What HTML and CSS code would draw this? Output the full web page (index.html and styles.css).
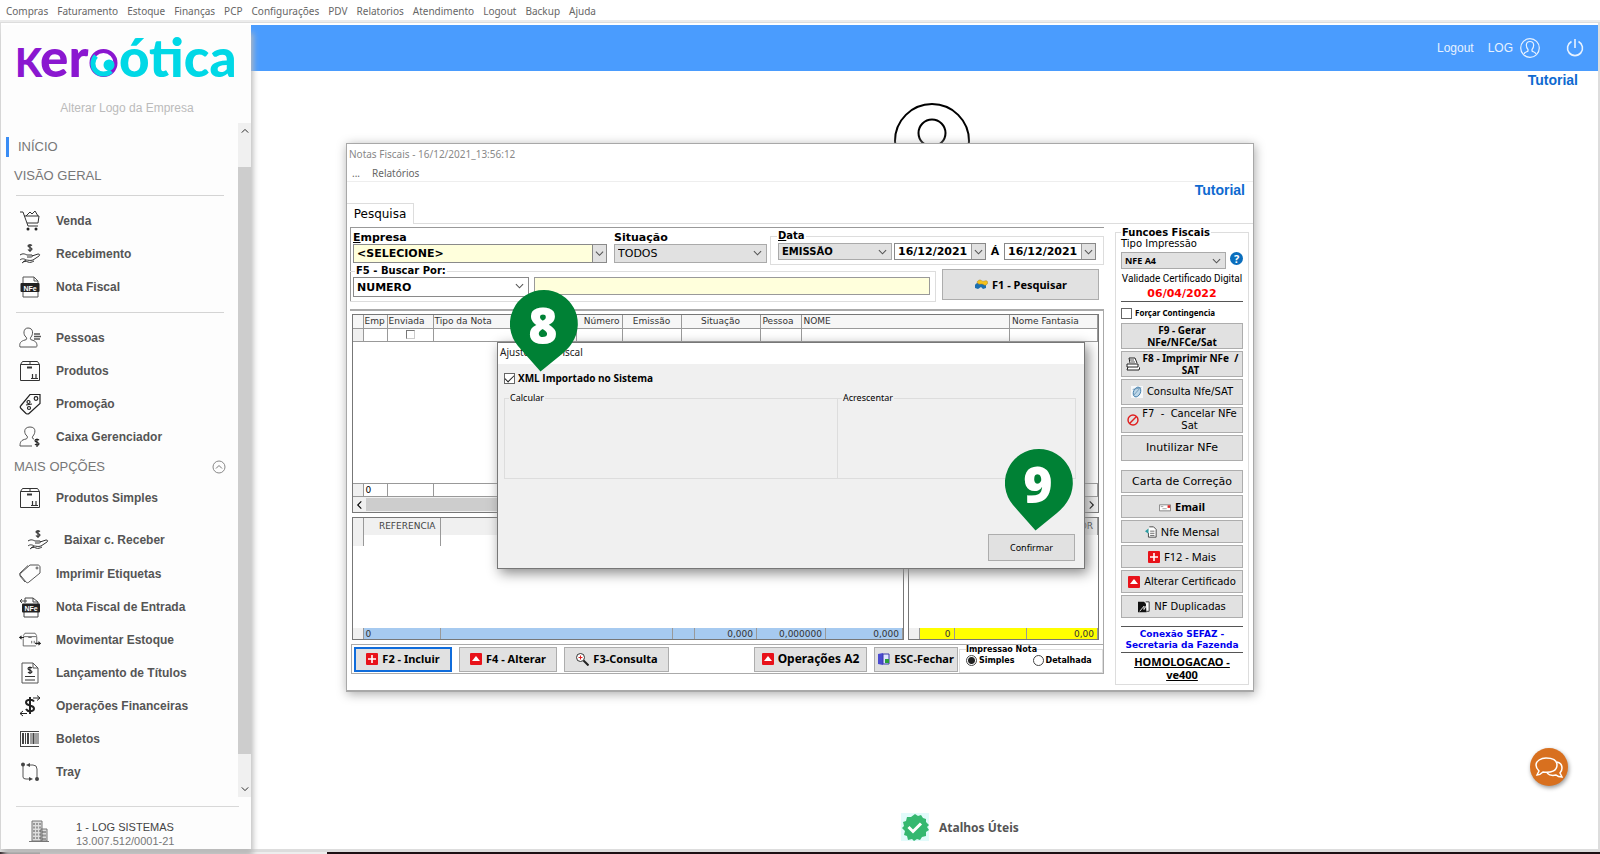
FILE: index.html
```html
<!DOCTYPE html>
<html lang="pt-BR">
<head>
<meta charset="utf-8">
<title>Kero Ótica - Notas Fiscais</title>
<link rel="stylesheet" href="styles.css">
</head>
<body>
<svg class="defs" aria-hidden="true">
  <symbol id="chev" viewBox="0 0 10 6"><path d="M1 1l4 4 4-4" fill="none" stroke="currentColor" stroke-width="1.2"/></symbol>
  <symbol id="cart" viewBox="0 0 22 22"><g fill="none" stroke="#333" stroke-width="1"><path d="M1 2h3l5 14h10M5 6h15l-1 7H8M7 6l4-4 2 2 3-3 3 5"/></g><circle cx="9" cy="19" r="1.5" fill="#222"/><circle cx="17" cy="19" r="1.5" fill="#222"/></symbol>
  <symbol id="hand" viewBox="0 0 22 22"><g fill="none" stroke="#333" stroke-width="1"><path d="M1 12c3-2 5-1 7 0h5c1 1 0 2-1 2H8M13 13l6-2c2 0 2 1 1 2l-6 4c-3 1-5 0-7 0l-3 2M1 17c2-2 5-1 6 0M3 20c2-2 4-2 6-1s4 0 6-1"/><path d="M13 2.500c-1-1-4-1-4 .5s4 1.500 4 3-3 2-4 .5M11 1v8" stroke-width="1.200"/></g></symbol>
  <symbol id="nfe" viewBox="0 0 22 22"><path d="M4 7V1h11l4 4v3M4 15v6h15v-6M15 1v4h4" fill="none" stroke="#555"/><rect x="1.500" y="7" width="19" height="9" rx="1" fill="#222"/><text x="11" y="14.500" class="nfe-text" text-anchor="middle">NFe</text></symbol>
  <symbol id="people" viewBox="0 0 22 22"><g fill="none" stroke="#555"><path d="M9 1c6 0 5 7 3 9-1 1-1 3 1 3 3 1 5 2 5 6 0 1-1 1-1 1H1c-1-4 1-6 5-7 2 0 2-2 1-3C4 8 4 1 9 1z"/><path d="M15 7h6M15 9.500h7M15 12h6" stroke-width="1.300"/></g></symbol>
  <symbol id="box" viewBox="0 0 22 22"><g fill="none" stroke="#333"><path d="M1.500 4.500h19v16h-19zM1.500 4.500l2-3h15l2 3M11 1v3"/><path d="M8 7.500h5" stroke-width="2"/><path d="M13.500 18v-4M17 18v-4M12 18.500h7" stroke-width="1.200"/></g></symbol>
  <symbol id="promo" viewBox="0 0 22 22"><g fill="none" stroke="#222" stroke-width="1.200"><path d="M11 1.500h10v9L10 20.500c-1 1-2 .5-3 0l-5-5c-1-1-1-2 0-3z"/><circle cx="17" cy="5.500" r="1.800"/><circle cx="9.500" cy="9" r="1.500"/><circle cx="10" cy="15" r="1.500"/><path d="M7 12l6-1"/></g></symbol>
  <symbol id="cashier" viewBox="0 0 22 22"><g fill="none" stroke="#555"><path d="M11 1c7 0 5 7 3 9-1 1-1 3 1 3M8 10C5 8 4 1 11 1M8 10c1 1 0 3-1 3-5 1-6 3-6 7h12"/><path d="M20 14c-1-1-4-1-4 .7s4 1.300 4 3-3 1.800-4 .3M18 12.500v8.500" stroke="#222" stroke-width="1.200"/></g></symbol>
  <symbol id="tag" viewBox="0 0 22 22"><g fill="none" stroke="#555"><path d="M11 2h8c1 0 2 1 2 2v6L10 19c-1 1-2 1-3 0l-5-6c-1-1-1-2 0-3zM9 2.500L1 10c-1 1 0 2 0 3l5 6"/><circle cx="18" cy="5" r="1"/></g></symbol>
  <symbol id="nfein" viewBox="0 0 22 22"><path d="M6 7V2h8l5 4v3M5 15v6h14v-6M14 2v4h5M8 5H1M3 3L1 5l2 2" fill="none" stroke="#444"/><rect x="3" y="7.500" width="18" height="9" rx="1" fill="#222"/><text x="12" y="14.500" class="nfe-text" text-anchor="middle">NFe</text></symbol>
  <symbol id="move" viewBox="0 0 26 22"><g fill="none" stroke="#555"><path d="M5 7h16v10M5 9v9h15M5 6l2-3h12l2 3M11 8h4M15 15v-3M18 15v-3"/><path d="M6 8H1l2-2M1 8l2 2M19 15h6l-2-2M25 15l-2 2" stroke="#222" stroke-width="1.300"/></g></symbol>
  <symbol id="doc" viewBox="0 0 22 22"><g fill="none" stroke="#555"><path d="M3 1h11l5 5v15H3zM14 1v5h5"/><path d="M6 14.500h10M6 18h10" stroke="#333"/><path d="M13 6c-1-1-4-1-4 .7s4 1.300 4 3-3 1.800-4 .3M11 4.500v7.500" stroke="#222" stroke-width="1.100"/></g></symbol>
  <symbol id="ops" viewBox="0 0 22 22"><g fill="none" stroke="#222"><path d="M15 6.500c-2-3-8-2-8 1 0 4 8 2 8 6 0 3-6 4-8 .5M11 2v17" stroke-width="2"/><path d="M14 3h7M18 .5L21 3l-3 2.500M8 18.500H1M4 16l-3 2.500L4 21"/></g></symbol>
  <symbol id="barcode" viewBox="0 0 22 22"><g fill="none" stroke="#444"><path d="M1.500 3v16M1 3.500h19M1 18.500h19"/><path d="M4 5v11M9 5v11M14.500 5v11" stroke-width="2"/><path d="M6.500 5v11M12 5v11M17 5v11M19 5v11"/></g></symbol>
  <symbol id="tray" viewBox="0 0 22 22"><g fill="none" stroke="#555"><path d="M4 5v11q0 2 3 2h5M18 18V8q0-4-4-4h-4"/></g><g fill="#444"><circle cx="4" cy="3.500" r="2"/><circle cx="18" cy="18" r="2"/><path d="M7 4l4-2v4zM14 18l-4-2v4z"/></g></symbol>
  <symbol id="plus" viewBox="0 0 12 12"><rect width="12" height="12" rx="1" fill="#e8121a"/><path d="M6 2v8M2 6h8" stroke="#fff" stroke-width="1.600"/></symbol>
  <symbol id="up" viewBox="0 0 12 12"><rect width="12" height="12" rx="1" fill="#e8121a"/><path d="M6 3l4 5H2z" fill="#fff"/></symbol>
  <symbol id="user" viewBox="0 0 20 20"><g fill="none" stroke="currentColor" stroke-width="1.200"><circle cx="10" cy="10" r="9.300"/><path d="M10 3.500c-5 0-4 6-2 8v1.500c-1 1-3 .5-4 3M10 3.500c5 0 4 6 2 8v1.500c1 1 3 .5 4 3"/></g></symbol>
</svg>

<nav class="menubar" aria-label="Menu principal">
  <a href="#">Compras</a><a href="#">Faturamento</a><a href="#">Estoque</a><a href="#">Finanças</a><a href="#">PCP</a><a href="#">Configurações</a><a href="#">PDV</a><a href="#">Relatorios</a><a href="#">Atendimento</a><a href="#">Logout</a><a href="#">Backup</a><a href="#">Ajuda</a>
</nav>

<div class="shell">
  <aside class="sidebar">
    <svg class="logo" viewBox="0 0 224 64" role="img" aria-label="Kero Ótica">
      <text x="-1" y="49" class="logo-k">K</text>
      <text x="24" y="49" class="logo-word">er</text>
      <circle cx="87.500" cy="35" r="12" fill="#fff" stroke="#8a17d0" stroke-width="4"/>
      <path d="M80 28a10.500 10.500 0 1 0 15 15" fill="none" stroke="#00d8e6" stroke-width="5"/>
      <circle cx="93" cy="37" r="5.500" fill="#00d8e6"/>
      <text x="103" y="49" class="logo-word logo-cyan">ótica</text>
    </svg>
    <a class="change-logo" href="#">Alterar Logo da Empresa</a>
    <div class="nav-wrap">
      <nav class="nav" aria-label="Navegação">
        <a class="home" href="#">INÍCIO</a>
        <h2 class="group">VISÃO GERAL</h2>
        <hr>
        <a class="item" href="#"><svg><use href="#cart"/></svg>Venda</a>
        <a class="item" href="#"><svg><use href="#hand"/></svg>Recebimento</a>
        <a class="item" href="#"><svg><use href="#nfe"/></svg>Nota Fiscal</a>
        <hr>
        <a class="item" href="#"><svg><use href="#people"/></svg>Pessoas</a>
        <a class="item" href="#"><svg><use href="#box"/></svg>Produtos</a>
        <a class="item" href="#"><svg><use href="#promo"/></svg>Promoção</a>
        <a class="item" href="#"><svg><use href="#cashier"/></svg>Caixa Gerenciador</a>
        <h2 class="group more">MAIS OPÇÕES
          <svg class="fold" viewBox="0 0 14 14"><circle cx="7" cy="7" r="6" fill="none" stroke="#888"/><path d="M4 8.500l3-3 3 3" fill="none" stroke="#777"/></svg>
        </h2>
        <a class="item" href="#"><svg><use href="#box"/></svg>Produtos Simples</a>
        <a class="item sub" href="#"><svg><use href="#hand"/></svg>Baixar c. Receber</a>
        <a class="item" href="#"><svg><use href="#tag"/></svg>Imprimir Etiquetas</a>
        <a class="item" href="#"><svg><use href="#nfein"/></svg>Nota Fiscal de Entrada</a>
        <a class="item" href="#"><svg><use href="#move"/></svg>Movimentar Estoque</a>
        <a class="item" href="#"><svg><use href="#doc"/></svg>Lançamento de Títulos</a>
        <a class="item" href="#"><svg><use href="#ops"/></svg>Operações Financeiras</a>
        <a class="item" href="#"><svg><use href="#barcode"/></svg>Boletos</a>
        <a class="item" href="#"><svg><use href="#tray"/></svg>Tray</a>
      </nav>
      <div class="vscroll">
        <svg class="flip"><use href="#chev"/></svg>
        <div class="thumb"></div>
        <svg><use href="#chev"/></svg>
      </div>
    </div>
    <div class="company">
      <svg viewBox="0 0 20 22"><path d="M3 1h10v20H3zM12 9h6v12h-6zM0 21.500h20" fill="#ddd" stroke="#777"/><path d="M5 3v17M8 3v17M11 3v17M14 11v9M16 11v9" stroke="#555" stroke-dasharray="2 1.500"/></svg>
      <p><span class="company-name">1 - LOG SISTEMAS</span><br>13.007.512/0001-21</p>
    </div>
  </aside>

  <main class="main">
    <header class="topbar">
      <a href="#">Logout</a>
      <a class="user" href="#">LOG <svg><use href="#user"/></svg></a>
      <button class="power" aria-label="Desligar"><svg viewBox="0 0 18 18"><path d="M5.500 2.500a7.500 7.500 0 1 0 7 0M9 0v9" fill="none" stroke="#e8f2ff" stroke-width="1.600"/></svg></button>
    </header>
    <a class="tutorial" href="#">Tutorial</a>
    <svg class="avatar" viewBox="0 0 78 78"><g fill="none" stroke="#000" stroke-width="2"><circle cx="39" cy="39" r="37"/><circle cx="39" cy="31" r="13.500"/><path d="M14 66c0-30 50-30 50 0"/></g></svg>

    <section class="window" aria-label="Notas Fiscais">
      <div class="win-title">Notas Fiscais - 16/12/2021_13:56:12</div>
      <div class="win-menu"><a href="#">...</a><a href="#">Relatórios</a></div>
      <div class="win-tools"><a class="tutorial-link" href="#">Tutorial</a></div>
      <div class="tabs"><button class="tab">Pesquisa</button></div>
      <div class="win-body">
        <div class="left">
          <form class="search">
            <div class="row1">
              <div class="field">
                <label for="empresa"><u>E</u>mpresa</label>
                <div class="combo boxed cream"><select id="empresa"><option>&lt;SELECIONE&gt;</option></select><svg><use href="#chev"/></svg></div>
              </div>
              <div class="field">
                <label for="situacao">Situação</label>
                <div class="combo gray plain"><select id="situacao"><option>TODOS</option></select><svg><use href="#chev"/></svg></div>
              </div>
              <fieldset class="dates">
                <legend><u>D</u>ata</legend>
                <div class="combo gray"><select aria-label="Tipo de data"><option>EMISSÃO</option></select><svg><use href="#chev"/></svg></div>
                <div class="date"><input type="text" value="16/12/2021" aria-label="Data inicial"><button type="button" aria-label="Abrir calendário"><svg><use href="#chev"/></svg></button></div>
                <span class="to">Á</span>
                <div class="date"><input type="text" value="16/12/2021" aria-label="Data final"><button type="button" aria-label="Abrir calendário"><svg><use href="#chev"/></svg></button></div>
              </fieldset>
            </div>
            <div class="row2">
              <fieldset class="by">
                <legend>F5 - Buscar Por:</legend>
                <div class="combo"><select aria-label="Buscar por"><option>NUMERO</option></select><svg><use href="#chev"/></svg></div>
                <input class="term" type="text" aria-label="Termo da busca">
              </fieldset>
              <button class="btn find" type="button"><svg class="binoc" viewBox="0 0 14 11"><path d="M1 6c1-2 4-3 6-2l5 1v4l-3 1-2-2-3 2-3-1z" fill="#1c6fb0"/><path d="M3 3c2-3 4-2 5-1s4-1 5 0 1 3-1 4-2-1-4-1-4 1-5-2z" fill="#f5c21b" stroke="#a8842a" stroke-width=".5"/></svg>F1 - Pesquisar</button>
            </div>
          </form>

          <div class="tables">
            <div class="gridbox">
              <table class="notes">
                <colgroup><col class="c-mark"><col class="c-emp"><col class="c-env"><col class="c-tipo"><col class="c-env"><col class="c-emi"><col class="c-sit"><col class="c-pes"><col><col class="c-fan"></colgroup>
                <thead><tr><th></th><th>Emp</th><th>Enviada</th><th>Tipo da Nota</th><th class="r">Número</th><th class="c">Emissão</th><th class="c">Situação</th><th>Pessoa</th><th>NOME</th><th>Nome Fantasia</th></tr></thead>
                <tbody><tr><td class="mark"></td><td></td><td class="c"><input type="checkbox" aria-label="Enviada"></td><td></td><td></td><td></td><td></td><td></td><td></td><td></td></tr></tbody>
              </table>
              <div class="blank"></div>
              <table class="notes foot">
                <colgroup><col class="c-mark"><col class="c-emp"><col class="c-env"><col></colgroup>
                <tbody><tr><td class="mark"></td><td>0</td><td></td><td></td></tr></tbody>
              </table>
              <div class="hscroll"><svg class="turn-l"><use href="#chev"/></svg><div class="hthumb"></div><svg class="turn-r"><use href="#chev"/></svg></div>
            </div>
            <div class="lower">
              <div class="gridbox">
                <table class="items">
                  <colgroup><col class="c-mark"><col class="c-ref"><col></colgroup>
                  <thead><tr><th></th><th class="r">REFERENCIA</th><th></th></tr></thead>
                  <tbody><tr><td class="mark"></td><td></td><td class="open"></td></tr></tbody>
                </table>
                <div class="blank"></div>
                <table class="totals blue">
                  <colgroup><col class="c-mark"><col class="c-ref"><col><col class="c-s"><col class="c-q"><col class="c-v"><col class="c-ref"></colgroup>
                  <tbody><tr><td class="mark"></td><td class="l">0</td><td></td><td></td><td>0,000</td><td>0,000000</td><td>0,000</td></tr></tbody>
                </table>
              </div>
              <div class="gridbox">
                <table class="items">
                  <colgroup><col class="c-mark"><col></colgroup>
                  <thead><tr><th></th><th class="r">VALOR</th></tr></thead>
                  <tbody><tr><td class="mark"></td><td class="open"></td></tr></tbody>
                </table>
                <div class="blank"></div>
                <table class="totals yellow">
                  <colgroup><col class="c-mark"><col class="c-n"><col><col class="c-fv"></colgroup>
                  <tbody><tr><td class="mark"></td><td>0</td><td></td><td>0,00</td></tr></tbody>
                </table>
              </div>
            </div>
          </div>

          <div class="actions">
            <button class="btn b98 focus"><svg><use href="#plus"/></svg>F2 - Incluir</button>
            <button class="btn b98"><svg><use href="#up"/></svg>F4 - Alterar</button>
            <button class="btn b105"><svg class="lens" viewBox="0 0 14 14"><circle cx="5.500" cy="5.500" r="4" fill="#fff" stroke="#333"/><path d="M5.500 3.500v4M3.500 5.500h4" stroke="#d22"/><path d="M8.500 8.500l5 5" stroke="#222" stroke-width="2"/></svg>F3-Consulta</button>
            <button class="btn b113 wide push"><svg><use href="#up"/></svg>Operações A2</button>
            <button class="btn b84"><svg viewBox="0 0 12 12"><path d="M0 1l5-1v12l-5-1z" fill="#4a4ad0"/><path d="M5 1h6v10H5z" fill="#dfe6ff" stroke="#3a3aa8"/><path d="M7 6h4v4H7z" fill="#2aa03a"/></svg>ESC-Fechar</button>
            <fieldset class="print">
              <legend>Impressao Nota</legend>
              <label><input type="radio" name="imp" checked>Simples</label>
              <label><input type="radio" name="imp">Detalhada</label>
            </fieldset>
          </div>
        </div>

        <fieldset class="fiscal">
          <legend>Funcoes Fiscais</legend>
          <label class="small" for="tipo">Tipo Impressão</label>
          <div class="tipo-row">
            <div class="combo gray"><select id="tipo"><option>NFE A4</option></select><svg><use href="#chev"/></svg></div>
            <button class="help" aria-label="Ajuda">?</button>
          </div>
          <p class="validity">Validade Certificado Digital</p>
          <p class="expiry">06/04/2022</p>
          <label class="force"><input type="checkbox">Forçar Contingencia</label>
          <div class="stack">
            <button class="btn two">F9 - Gerar<br>NFe/NFCe/Sat</button>
            <button class="btn two"><svg class="printer" viewBox="0 0 14 14"><path d="M4 6L3 1h6l2 5M1 7h11v3H1zM2 10l-1 3h12l1-3" fill="#fff" stroke="#222"/><path d="M4 3h4M5 5h4" stroke="#555"/></svg><span>F8 - Imprimir NFe &nbsp;/<br>SAT</span></button>
            <button class="btn reg"><svg viewBox="0 0 14 14"><rect width="14" height="14" fill="#f6f8fa"/><ellipse cx="7" cy="7" rx="4" ry="6" transform="rotate(25 7 7)" fill="#bcd6e8" stroke="#3a78a8"/><path d="M2 4l10-2M3 11l7-8" stroke="#6a94b4"/></svg>Consulta Nfe/SAT</button>
            <button class="btn reg two"><svg viewBox="0 0 14 14"><circle cx="7" cy="7" r="5.800" fill="none" stroke="#e02020" stroke-width="1.700"/><path d="M3 11l8-8" stroke="#e02020" stroke-width="1.700"/></svg><span>F7 &nbsp;- &nbsp;Cancelar NFe<br>Sat</span></button>
            <button class="btn reg big">Inutilizar NFe</button>
          </div>
          <div class="stack low">
            <button class="btn reg big">Carta de Correção</button>
            <button class="btn"><svg viewBox="0 0 14 12"><path d="M.5 3.500h13v7H.5z" fill="#fff" stroke="#777"/><path d="M2 5.500h3M4 8h5" stroke="#999"/><path d="M10 4h3v3h-3z" fill="#d22"/></svg>Email</button>
            <button class="btn reg cond"><svg viewBox="0 0 14 14"><path d="M5 1h5l3 3v9H4V8" fill="#fff" stroke="#333"/><path d="M6 6h5M6 8.500h5M6 11h5" stroke="#555"/><path d="M0 6l4-3v6z" fill="#2a9aa0"/></svg>Nfe Mensal</button>
            <button class="btn reg cond"><svg><use href="#plus"/></svg>F12 - Mais</button>
            <button class="btn reg"><svg><use href="#up"/></svg>Alterar Certificado</button>
            <button class="btn reg"><svg viewBox="0 0 14 14"><path d="M0 1h7l3 3v9H0z" fill="#111"/><path d="M2 12l5-6v4l3-5" fill="none" stroke="#fff"/><path d="M9 1h4v11h-3" fill="#fff" stroke="#222"/></svg>NF Duplicadas</button>
          </div>
          <p class="sefaz">Conexão SEFAZ -<br>Secretaria da Fazenda</p>
          <a class="homolog" href="#">HOMOLOGACAO -<br>ve400</a>
        </fieldset>
      </div>

      <div class="dialog" role="dialog" aria-label="Ajuste Nota Fiscal">
        <div class="dlg-title">Ajuste Nota Fiscal</div>
        <div class="dlg-body">
          <label class="xml"><input type="checkbox" checked>XML Importado no Sistema</label>
          <div class="groups">
            <fieldset><legend>Calcular</legend></fieldset>
            <fieldset><legend>Acrescentar</legend></fieldset>
          </div>
          <button class="btn confirm">Confirmar</button>
        </div>
        <svg class="pin pin-8" viewBox="0 0 68 82"><path d="M34 0a34 34 0 0 1 28 53q-3 5-10 11L30.500 81.500 8 56A34 34 0 0 1 34 0z" fill="#008135"/><text x="33" y="54" text-anchor="middle">8</text></svg>
        <svg class="pin pin-9" viewBox="0 0 68 82"><path d="M34 0a34 34 0 0 1 28 53q-3 5-10 11L30.500 81.500 8 56A34 34 0 0 1 34 0z" fill="#008135"/><text x="33" y="54" text-anchor="middle">9</text></svg>
      </div>
    </section>

    <a class="shortcuts" href="#">
      <svg viewBox="0 0 28 28"><rect width="28" height="28" fill="#e2fbfb"/><path d="M14 1l3 2 3-1 2 3 3 1v3l3 3-2 2 2 3-3 2v4l-4 1-2 3-3-1-3 2-2-2-4 1-1-4-3-1 1-4-3-3 2-2-1-4 3-1 1-4 4 0z" fill="#35b870"/><path d="M7.500 14l4.500 4.500 8-8" fill="none" stroke="#fff" stroke-width="3"/></svg>
      Atalhos Úteis
    </a>
    <button class="chat" aria-label="Chat"><svg viewBox="0 0 30 30"><g fill="none" stroke="#fff" stroke-width="1.500"><path d="M12 6c-5 0-10 3-10 7 0 3 1 4 3 6l-2 4c3 0 5-2 6-3 8 1 14-1 14-7 0-5-5-7-11-7z"/><path d="M23 10c4 1 5 4 5 6 0 3-1 4-2 5l2 4c-3 0-5-1-6-2-4 1-7 0-9-2"/></g></svg></button>
  </main>
</div>
<footer class="taskbar"><span></span></footer>
</body>
</html>
```
FILE: styles.css
```css
* { box-sizing: border-box; }
body { margin: 0; min-height: 100vh; display: flex; flex-direction: column; background: #fff; color: #000; font-family: "Noto Sans", sans-serif; font-size: 10px; overflow: hidden; }
a { color: inherit; text-decoration: none; }
button, input, select { font: inherit; color: inherit; margin: 0; padding: 0; border-radius: 0; }
h2, p, fieldset, legend { margin: 0; padding: 0; min-width: 0; }
.defs { display: none; }
.nfe-text { font: bold 7px "Liberation Sans", sans-serif; fill: #fff; }

.menubar { height: 22px; display: flex; align-items: center; gap: 9px; padding: 1px 6px 0; color: #666; border-bottom: 2px solid #ececec; }
.shell { flex: 1; display: flex; border: 1px solid #ddd; border-right-width: 2px; border-bottom: 3px solid #ddd; padding-top: 2px; min-height: 0; }

.sidebar { width: 250px; flex: none; display: flex; flex-direction: column; background: #fdfdfd; box-shadow: 2px 8px 6px #bbb; z-index: 1; font-family: "Liberation Sans", sans-serif; }
.logo { width: 224px; height: 64px; margin: 3px 0 0 15px; overflow: visible; }
.logo-word { font: 900 53px Lato, sans-serif; fill: #8a17d0; }
.logo-k { font: 900 39px Lato, sans-serif; fill: #8a17d0; }
.logo-word.logo-cyan { fill: #00d8e6; }
.change-logo { margin-top: 8px; padding-left: 2px; line-height: 16px; text-align: center; font-size: 12px; color: #bbb; }
.nav-wrap { flex: 1; display: flex; margin-top: 7px; min-height: 0; }
.nav { flex: 1; padding: 14px 14px 0 5px; overflow: hidden; }
.nav hr { margin: 9px 0 8px 10px; border: 0; border-top: 1px solid #d4d4d4; }
.home { display: block; width: 60px; border-left: 3px solid #3a8df5; padding-left: 9px; line-height: 20px; font-size: 13px; color: #777; }
.group { margin: 9px 0 0 8px; line-height: 20px; font-size: 13px; font-weight: normal; color: #777; }
.group.more { display: flex; justify-content: space-between; align-items: center; margin: 4px 0 4px 8px; }
.fold { width: 14px; height: 14px; margin-right: -2px; }
.item { height: 33px; display: flex; align-items: center; gap: 15px; padding-left: 13px; font-size: 12px; font-weight: bold; color: #555; white-space: nowrap; }
.item svg { width: 22px; height: 22px; }
.item.sub { height: 43px; padding: 8px 0 0 21px; }
.vscroll { width: 13px; display: flex; flex-direction: column; justify-content: space-between; align-items: center; padding: 5px 0; background: #f0f0f0; }
.vscroll svg { width: 8px; height: 6px; color: #222; }
.flip { transform: rotate(180deg); }
.thumb { width: 13px; flex: 1; margin: 33px 0 32px; background: #cdcdcd; }
.company { margin: 9px 12px 0 15px; padding: 13px 0 0 13px; border-top: 1px solid #d8d8d8; display: flex; gap: 27px; height: 43px; }
.company svg { width: 20px; height: 22px; }
.company p { font-size: 11px; line-height: 14px; color: #777; }
.company-name { color: #444; }

.main { flex: 1; position: relative; min-width: 0; background: #fff; }
.topbar { height: 46px; background: #4a9cfe; display: flex; align-items: center; justify-content: flex-end; padding-right: 14px; color: #e8f2ff; font: 12px "Liberation Sans", sans-serif; }
.user { display: flex; align-items: center; gap: 7px; margin-left: 14px; }
.user svg { width: 20px; height: 20px; }
.power { margin-left: 26px; border: 0; background: none; height: 18px; }
.power svg { width: 18px; height: 18px; display: block; }
.tutorial { display: block; padding: 1px 20px; text-align: right; line-height: 16px; font: bold 14px "Liberation Sans", sans-serif; color: #0f6ad0; }
.avatar { position: absolute; left: 642px; top: 77px; width: 78px; height: 78px; }

.window { position: absolute; left: 95px; top: 118px; width: 908px; background: #fff; border: 1px solid #a8a8a8; border-bottom-width: 2px; box-shadow: 1px 2px 10px #aaa; }
.win-title { height: 20px; line-height: 20px; padding-left: 2px; color: #888; }
.win-menu { height: 18px; line-height: 19px; padding-left: 5px; display: flex; gap: 12px; color: #666; border-bottom: 1px solid #eee; }
.win-tools { height: 21px; padding-right: 8px; text-align: right; font: bold 14px "Liberation Sans", sans-serif; color: #0f6ad0; }
.tabs { height: 21px; border-bottom: 1px solid #ddd; }
.tab { height: 21px; width: 67px; background: #fff; border: 1px solid #ddd; border-width: 1px 1px 0 0; font: 12px "DejaVu Sans", sans-serif; }
.win-body { display: grid; grid-template-columns: 1fr 134px; gap: 11px; padding: 3px 4px 5px 3px; font-family: "DejaVu Sans", sans-serif; }
fieldset { border: 1px solid #ddd; }

.search { height: 75px; border: 1px solid #999; border-width: 1px 0 0 1px; padding: 2px 0 0 2px; font-weight: bold; }
.row1 { display: grid; grid-template-columns: 254px 153px 1fr; gap: 7px; height: 35px; }
.field label { display: block; font-size: 11px; line-height: 13px; padding-top: 1px; }
.combo { position: relative; height: 19px; border: 1px solid #8a8a8a; background: #fff; font-size: 11px; }
.combo select { appearance: none; width: 100%; height: 100%; border: 0; padding-left: 3px; background: transparent; font-weight: bold; display: block; }
.combo > svg { position: absolute; right: 4px; top: 5px; width: 9px; height: 6px; color: #555; pointer-events: none; }
.combo.cream { background: #ffffdc; }
.combo.boxed > svg { right: 0; top: 0; width: 14px; height: 17px; padding: 4px 2px; background: #e1e1e1; border-left: 1px solid #888; }
.combo.gray { background: #e1e1e1; border-color: #aaa; }
.combo.plain select { font-weight: normal; }
.dates { margin-left: -4px; margin-right: 0; height: 35px; display: flex; align-items: center; gap: 2px; padding: 0 6px 3px 7px; }
.dates legend, .by legend { font-size: 10px; line-height: 12px; padding: 0 1px; }
.dates legend { margin-left: -1px; }
.by legend { margin-left: 2px; }
.dates .combo { width: 114px; height: 17px; flex: none; font-size: 10px; }
.date { width: 92px; height: 17px; display: flex; border: 1px solid #888; background: #fff; font-size: 11px; }
.date input { flex: 1; width: 60px; border: 0; padding-left: 3px; background: none; font-weight: bold; }
.date button { width: 14px; border: 0; border-left: 1px solid #999; background: #e1e1e1; display: grid; place-items: center; }
.date svg { width: 9px; height: 6px; color: #555; }
.to { width: 14px; text-align: center; font-size: 11px; }
.row2 { display: flex; gap: 6px; padding-right: 5px; }
.by { flex: 1; height: 37px; display: flex; gap: 5px; margin-left: -3px; border-left: 0; padding-left: 3px; }
.by .combo { width: 176px; height: 20px; }
.by .term { flex: 1; min-width: 0; margin-right: 5px; height: 18px; border: 1px solid #999; background: #ffffdc; }
.btn { display: flex; align-items: center; justify-content: center; gap: 4px; border: 1px solid #adadad; background: #e1e1e1; font: bold 11px "Noto Sans", sans-serif; line-height: 12px; white-space: nowrap; }
.btn svg { width: 12px; height: 12px; flex: none; }
.find { width: 157px; height: 31px; margin-top: 4px; }
.find .binoc { width: 14px; height: 11px; }
.btn .lens { width: 14px; height: 14px; }

.tables { margin-top: 7px; border: 1px solid #aaa; border-width: 2px 1px 0 0; padding: 3px 4px 4px 2px; display: flex; flex-direction: column; gap: 4px; }
.gridbox { display: flex; flex-direction: column; border: 1px solid #777; min-height: 123px; }
.tables > .gridbox { min-height: 199px; }
.blank { flex: 1; }
table { width: 100%; table-layout: fixed; border-collapse: collapse; font-size: 9px; }
th, td { height: 13px; padding: 0 2px; font-weight: normal; text-align: left; line-height: 11px; white-space: nowrap; overflow: hidden; border: 1px solid #999; border-width: 0 1px 1px 0; }
.notes th { background: #f6f6f6; color: #333; }
.notes th:nth-child(-n+4) { padding-left: 1px; }
.mark { background: #f0f0f0; }
.c { text-align: center; } .r { text-align: right; }
.notes input { appearance: none; width: 9px; height: 9px; border: 1px solid #777; border-right-color: #ccc; border-bottom-color: #ccc; display: block; margin: 0 auto; }
.foot td { border-top-width: 1px; }
.c-mark { width: 10px; } .c-emp { width: 24px; } .c-env { width: 46px; } .c-tipo { width: 143px; } .c-emi { width: 59px; } .c-sit { width: 79px; } .c-pes { width: 41px; } .c-fan { width: 88px; }
.c-ref { width: 77px; } .c-s { width: 22px; } .c-q { width: 62px; } .c-v { width: 69px; } .c-n { width: 35px; } .c-fv { width: 71px; }
.hscroll { height: 15px; display: flex; align-items: center; background: #f0f0f0; }
.hscroll svg { width: 9px; height: 6px; margin: 0 2px; }
.turn-l { transform: rotate(90deg); } .turn-r { transform: rotate(-90deg); }
.hthumb { flex: 1; height: 13px; margin-right: 60px; background: #cdcdcd; }
.lower { display: grid; grid-template-columns: 1fr 191px; gap: 4px; }
.items th { height: 17px; background: #f0f0f0; border-bottom: 0; color: #444; padding-right: 4px; }
.items td { height: 11px; border-bottom: 0; }
.items .open { border-right: 0; }
.totals td { height: 11px; line-height: 10px; border-bottom: 0; text-align: right; padding-right: 3px; color: #333; }
.totals td.l { text-align: left; }
.blue td { background: #a6caf0; } .yellow td { background: #ff0; }
.totals td.mark { background: #f0f0f0; }

.actions { display: flex; align-items: center; gap: 7px; height: 30px; margin-left: 1px; border: 1px solid #aaa; padding: 0 0 0 2px; }
.actions .btn { height: 25px; flex: none; }
.b98 { width: 98px; } .b105 { width: 105px; } .b113 { width: 113px; } .b84 { width: 84px; }
.btn.focus { border: 2px solid #0f6cdb; }
.push { margin-left: auto; }
.btn.wide { font-size: 12px; }
.print { flex: none; width: 144px; height: 27px; margin-left: -6px; display: flex; gap: 18px; padding: 0 0 4px 6px; font-size: 8px; font-weight: bold; }
.print legend { line-height: 8px; }
.print label { display: flex; align-items: center; gap: 2px; }
.print input { appearance: none; width: 11px; height: 11px; border: 1px solid #444; border-radius: 50%; background: #fff; }
.print input:checked { background: radial-gradient(#222 0 3px, #fff 4px); }

.fiscal { display: flex; flex-direction: column; padding: 0 5px 3px; text-align: center; }
.fiscal legend { text-align: left; font-weight: bold; line-height: 11px; font-size: 10px; padding: 0 1px; }
.small { text-align: left; font-size: 10px; line-height: 11px; }
.tipo-row { display: flex; gap: 4px; margin-top: 3px; }
.tipo-row .combo { width: 106px; height: 17px; font: 9px "Noto Sans", sans-serif; }
.help { width: 13px; height: 13px; border: 0; border-radius: 50%; background: #0a6ebd; color: #fff; font: bold 11px/13px "Noto Sans", sans-serif; }
.validity { margin-top: 4px; font: 10px/12px Roboto, sans-serif; white-space: nowrap; }
.expiry { margin-top: 2px; line-height: 14px; font-size: 11px; font-weight: bold; color: #f00; border-bottom: 1px solid #555; }
.force { display: flex; align-items: center; gap: 3px; margin: 5px 0 4px; font: bold 8px/12px "Noto Sans", sans-serif; white-space: nowrap; }
.force input, .xml input { appearance: none; width: 11px; height: 11px; border: 1px solid #666; background: #fff; display: grid; place-items: center; }
.stack { display: grid; gap: 2px; grid-auto-rows: 26px; }
.stack.low { margin-top: 9px; grid-auto-rows: 23px; }
.btn.two { font-size: 10px; gap: 3px; }
.btn .printer { width: 14px; height: 14px; }
.btn.reg { font: 10px/12px "DejaVu Sans", sans-serif; }
.btn.reg.big { font-size: 11px; }
.btn.reg.cond { font: 11px "Noto Sans", sans-serif; }
.sefaz { margin-top: 8px; padding: 2px 0 1px; border: 1px solid #555; border-width: 1px 0; font: bold 9px/11px "DejaVu Sans", sans-serif; color: #00e; }
.homolog { margin-top: 2px; font: bold 11px/13px "Noto Sans", sans-serif; text-decoration: underline; }

.dialog { position: absolute; left: 150px; top: 198px; width: 588px; height: 227px; display: flex; flex-direction: column; background: #f0f0f0; border: 1px solid #777; box-shadow: 3px 4px 12px #888; }
.dlg-title { height: 21px; line-height: 18px; padding-left: 2px; background: #fff; color: #222; }
.dlg-body { flex: 1; display: flex; flex-direction: column; padding: 7px 8px 7px 6px; }
.xml { display: flex; align-items: center; gap: 3px; font: bold 10px/14px "Open Sans", sans-serif; }
.xml input:checked::after { content: ""; width: 8px; height: 4px; border: solid #222; border-width: 0 0 1px 1px; transform: rotate(-45deg); margin-bottom: 2px; }
.groups { display: grid; grid-template-columns: 334px 1fr; margin-top: 7px; }
.groups fieldset { height: 87px; }
.groups fieldset + fieldset { border-left: 0; }
.groups legend { margin-left: 4px; padding: 0 1px; line-height: 12px; font-size: 9px; }
.confirm { width: 87px; height: 27px; margin: auto 1px 0 auto; font-weight: normal; font-size: 9px; }
.pin { position: absolute; width: 68px; height: 82px; }
.pin text { font: 800 50px "Open Sans", sans-serif; fill: #fff; }
.pin-8 { left: 12px; top: -53px; }
.pin-9 { left: 507px; top: 106px; }

.shortcuts { position: absolute; left: 650px; bottom: 8px; display: flex; align-items: center; gap: 10px; font: bold 12px "Noto Sans", sans-serif; color: #555; }
.shortcuts svg { width: 28px; height: 28px; }
.chat { position: absolute; right: 30px; bottom: 63px; width: 38px; height: 38px; border: 0; border-radius: 50%; background: #d8701f; box-shadow: 1px 2px 4px #999; display: grid; place-items: center; }
.chat svg { width: 30px; height: 30px; }
.taskbar { height: 2px; background: #1c1014; padding-left: 40px; display: flex; }
.taskbar span { width: 287px; background: #eee; }
```
